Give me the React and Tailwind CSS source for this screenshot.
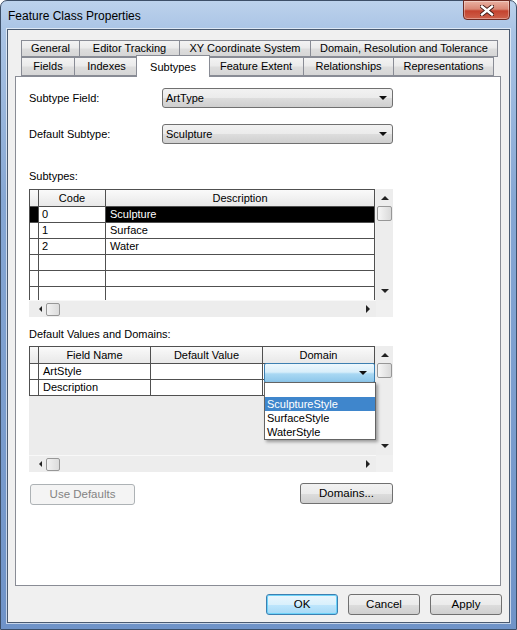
import React from "react";

const tabsTop = [
  { label: "General", w: "w-[58px]" },
  { label: "Editor Tracking", w: "w-[100px]" },
  { label: "XY Coordinate System", w: "w-[131px]" },
  { label: "Domain, Resolution and Tolerance", w: "w-[188px]" },
];

const tabsBottom = [
  { label: "Fields", w: "w-[53px]" },
  { label: "Indexes", w: "w-[64px]" },
  { label: "Subtypes", w: "w-[74px]", active: true },
  { label: "Feature Extent", w: "w-[95px]" },
  { label: "Relationships", w: "w-[90px]" },
  { label: "Representations", w: "w-[101px]" },
];

const TriDown = ({ color = "border-t-[#111]" }) => (
  <span className={`w-0 h-0 border-x-[4px] border-x-transparent border-t-[4px] ${color}`} />
);

const Combo = ({ value }) => (
  <div className="w-[231px] h-[20px] flex items-center justify-between pl-[3px] pr-[5px] rounded-[3px] border border-[#707070] bg-[linear-gradient(180deg,#f2f2f2_0%,#ebebeb_50%,#dddddd_50%,#cfcfcf_100%)] text-[11px] text-black">
    <span>{value}</span>
    <TriDown />
  </div>
);

const HScroll = () => (
  <div className="h-[17px] flex items-center bg-[#ededed] border-t border-[#f8f8f8]">
    <span className="ml-[10px] w-0 h-0 border-y-[3px] border-y-transparent border-r-[3px] border-r-[#222]" />
    <div className="ml-[4px] w-[14px] h-[13px] rounded-[2px] border border-[#979797] bg-[linear-gradient(90deg,#f2f2f2,#dcdcdc)]" />
    <div className="flex-1" />
    <span className="mr-[6px] w-0 h-0 border-y-[4px] border-y-transparent border-l-[4px] border-l-[#222]" />
  </div>
);

const VScroll = ({ h }) => (
  <div className={`w-[17px] ${h} flex flex-col items-center bg-[#ededed]`}>
    <span className="mt-[7px] w-0 h-0 border-x-[4px] border-x-transparent border-b-[4px] border-b-[#222]" />
    <div className="mt-[6px] w-[15px] h-[15px] rounded-[2px] border border-[#979797] bg-[linear-gradient(90deg,#f6f6f6,#d9d9d9)]" />
    <div className="flex-1" />
    <span className="mb-[7px] w-0 h-0 border-x-[4px] border-x-transparent border-t-[4px] border-t-[#222]" />
  </div>
);

const headCell = "h-[18px] flex items-center justify-center border-r border-b border-t border-[#505050] bg-[linear-gradient(180deg,#fafafa,#e8e8e8)] text-[11px] text-black";
const cell = "h-[16px] flex items-center border-r border-b border-[#505050] text-[11px] overflow-hidden whitespace-nowrap";

const subtypes = [
  { code: "0", desc: "Sculpture", sel: true },
  { code: "1", desc: "Surface" },
  { code: "2", desc: "Water" },
  { code: "", desc: "" },
  { code: "", desc: "" },
  { code: "", desc: "" },
];

const SubtypesGrid = () => (
  <div className="flex w-[364px] h-[128px] bg-[#f0f0f0]">
    <div className="flex flex-col w-[347px]">
      <div className="h-[111px] overflow-hidden bg-[#f0f0f0]">
        <div className="flex">
          <div className={`${headCell} w-[10px] border-l`} />
          <div className={`${headCell} w-[67px]`}>Code</div>
          <div className={`${headCell} w-[269px]`}>Description</div>
        </div>
        {subtypes.map((r, i) => (
          <div key={i} className="flex">
            <div className={`${cell} w-[10px] border-l ${r.sel ? "bg-black" : "bg-white"}`} />
            <div className={`${cell} w-[67px] pl-[3px] bg-white text-black`}>{r.code}</div>
            <div className={`${cell} w-[269px] pl-[4px] ${r.sel ? "bg-black text-white" : "bg-white text-black"}`}>{r.desc}</div>
          </div>
        ))}
      </div>
      <HScroll />
    </div>
    <div className="flex flex-col">
      <VScroll h="h-[111px]" />
      <div className="w-[17px] h-[17px] bg-[#f0f0f0]" />
    </div>
  </div>
);

const DomainsGrid = () => (
  <div className="flex w-[364px] h-[126px] bg-[#f0f0f0]">
    <div className="flex flex-col w-[347px]">
      <div className="relative h-[109px] bg-[#ececec]">
        <div className="flex">
          <div className={`${headCell} w-[10px] border-l`} />
          <div className={`${headCell} w-[112px]`}>Field Name</div>
          <div className={`${headCell} w-[112px]`}>Default Value</div>
          <div className={`${headCell} w-[112px]`}>Domain</div>
        </div>
        {["ArtStyle", "Description"].map((f) => (
          <div key={f} className="flex">
            <div className={`${cell} w-[10px] border-l bg-white`} />
            <div className={`${cell} w-[112px] pl-[4px] bg-white text-black`}>{f}</div>
            <div className={`${cell} w-[112px] bg-white`} />
            <div className={`${cell} w-[112px] bg-white`} />
          </div>
        ))}

        {/* cell editor */}
        <div className="absolute left-[235px] top-[17px] w-[111px] h-[20px] flex items-center justify-end pr-[7px] rounded-[2px] border border-[#3c7fb1] bg-[linear-gradient(180deg,#eef8fd_0%,#d8eefa_45%,#a9d8f3_55%,#8cc6ea_100%)]">
          <TriDown />
        </div>

        {/* open dropdown list */}
        <div className="absolute left-[235px] top-[36px] w-[112px] h-[58px] flex flex-col border border-[#646464] bg-white shadow-[2px_2px_3px_rgba(0,0,0,0.35)] text-[11px]">
          <div className="h-[15px]" />
          <div className="h-[14px] flex items-center pl-[2px] bg-[#3f86cc] text-white">SculptureStyle</div>
          <div className="h-[14px] flex items-center pl-[2px] text-black">SurfaceStyle</div>
          <div className="h-[14px] flex items-center pl-[2px] text-black">WaterStyle</div>
        </div>
      </div>
      <HScroll />
    </div>
    <div className="flex flex-col">
      <VScroll h="h-[109px]" />
      <div className="w-[17px] h-[17px] bg-[#f0f0f0]" />
    </div>
  </div>
);

const Tab = ({ label, w, active, h }) =>
  active ? (
    <div className={`relative z-10 ${w} -mx-[2px] h-[22px] -mb-px flex items-start justify-center pt-[3px] border border-b-0 border-[#898c95] bg-white text-[11px] text-black`}>
      {label}
    </div>
  ) : (
    <div className={`${w} ${h} flex items-center justify-center border border-r-0 last:border-r border-[#898c95] bg-[linear-gradient(180deg,#f3f3f3_0%,#ebebeb_45%,#dddddd_55%,#d6d6d6_100%)] text-[11px] text-black`}>
      {label}
    </div>
  );

const BottomButton = ({ children, primary }) => (
  <div
    className={`w-[72px] h-[21px] flex items-center justify-center rounded-[3px] border text-[11.5px] text-black ${
      primary
        ? "border-[#3c7fb1] shadow-[inset_0_0_0_1px_#6cd2f8] bg-[linear-gradient(180deg,#eaf6fd_0%,#d9f0fc_50%,#bee6fd_50%,#a7d9f5_100%)]"
        : "border-[#707070] bg-[linear-gradient(180deg,#f2f2f2_0%,#ebebeb_50%,#dddddd_50%,#cfcfcf_100%)]"
    }`}
  >
    {children}
  </div>
);

export default function App() {
  return (
    <div className="w-[517px] h-[630px] bg-white font-['Liberation_Sans',Arial,sans-serif]">
      <div className="w-full h-full flex flex-col rounded-t-[7px] border border-[#3d4f68] bg-[linear-gradient(180deg,#bcd2ec_0px,#aac4e5_30px,#86a7d4_200px,#6f93c8_100%)]">
        {/* title bar */}
        <div className="h-[28px] flex items-start justify-between">
          <span className="pl-[7px] pt-[8px] text-[12px] leading-[14px] text-black">Feature Class Properties</span>
          <div className="-mt-px mr-[6px] w-[47px] h-[20px] flex items-center justify-center rounded-b-[4px] border border-[#6e2a22] bg-[linear-gradient(180deg,#eab1a2_0%,#d98775_45%,#c4432f_55%,#cf624c_100%)] shadow-[inset_0_0_0_1px_rgba(255,255,255,0.35)]">
            <svg width="14" height="11" viewBox="0 0 14 11">
              <path d="M2 1.5 L12 9.5 M12 1.5 L2 9.5" stroke="#3b1510" strokeWidth="4.2" strokeLinecap="square" />
              <path d="M2 1.5 L12 9.5 M12 1.5 L2 9.5" stroke="#ffffff" strokeWidth="2.4" strokeLinecap="square" />
            </svg>
          </div>
        </div>

        {/* client */}
        <div className="flex-1 mx-[6px] mb-[6px] flex flex-col border border-[#4a5a70] shadow-[0_0_0_1px_rgba(255,255,255,0.6)] bg-[#f0f0f0] pt-[10px]">
          {/* tabs */}
          <div className="ml-[13px] flex flex-col">
            <div className="flex">
              {tabsTop.map((t) => (
                <Tab key={t.label} {...t} h="h-[17px]" />
              ))}
            </div>
            <div className="flex items-end h-[19px]">
              {tabsBottom.map((t) => (
                <Tab key={t.label} {...t} h="h-[19px]" />
              ))}
            </div>
          </div>

          {/* panel */}
          <div className="ml-[7px] w-[486px] h-[510px] border border-[#898c95] bg-white pl-[13px] pt-[11px] flex flex-col text-[11px] text-black">
            <div className="flex items-center h-[20px]">
              <span className="w-[133px]">Subtype Field:</span>
              <Combo value="ArtType" />
            </div>
            <div className="flex items-center h-[20px] mt-[16px]">
              <span className="w-[133px]">Default Subtype:</span>
              <Combo value="Sculpture" />
            </div>

            <div className="mt-[25px] h-[14px] leading-[14px]">Subtypes:</div>
            <div className="mt-[6px]">
              <SubtypesGrid />
            </div>

            <div className="mt-[10px] h-[14px] leading-[14px]">Default Values and Domains:</div>
            <div className="mt-[5px]">
              <DomainsGrid />
            </div>

            <div className="mt-[12px] flex items-start">
              <div className="ml-px w-[105px] h-[21px] flex items-center justify-center rounded-[3px] border border-[#adb2b5] bg-[#f4f4f4] text-[#838383] text-[11.5px]">
                Use Defaults
              </div>
              <div className="ml-[165px] -mt-px w-[93px] h-[21px] flex items-center justify-center rounded-[3px] border border-[#707070] bg-[linear-gradient(180deg,#f2f2f2_0%,#ebebeb_50%,#dddddd_50%,#cfcfcf_100%)] text-[11.5px]">
                Domains...
              </div>
            </div>
          </div>

          {/* dialog buttons */}
          <div className="mt-[8px] pr-[7px] flex justify-end gap-[10px]">
            <BottomButton primary>OK</BottomButton>
            <BottomButton>Cancel</BottomButton>
            <BottomButton>Apply</BottomButton>
          </div>
        </div>
      </div>
    </div>
  );
}
